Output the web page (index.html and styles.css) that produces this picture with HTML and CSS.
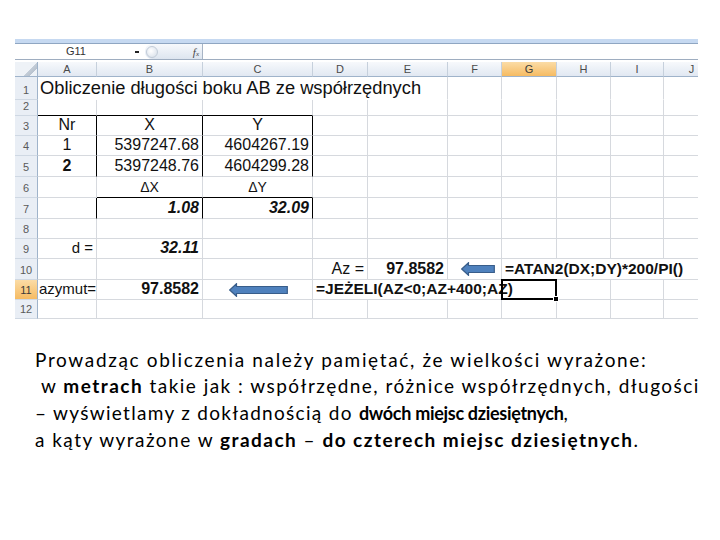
FILE: index.html
```html
<!DOCTYPE html>
<html lang="pl">
<head>
  <meta charset="UTF-8" />
  <meta name="viewport" content="width=device-width, initial-scale=1.0"/>
  <title>Obliczenie długości boku AB</title>
  <link rel="stylesheet" href="styles.css">
</head>
<body>
  <div class="excel">
    <div class="ribbon-edge"></div>
    <div class="formula-bar">
      <div class="name-box">G11</div>
      <div class="name-drop"><span></span></div>
      <div class="fx-zone">
        <span class="fx-knob"></span>
        <span class="fx">f<small>x</small></span>
      </div>
      <div class="formula-input"></div>
    </div>

    <table class="grid">
      <colgroup>
        <col class="c-rh"><col class="c-a"><col class="c-b"><col class="c-c"><col class="c-d">
        <col class="c-e"><col class="c-f"><col class="c-g"><col class="c-h"><col class="c-i"><col class="c-j">
      </colgroup>
      <tr class="r-head">
        <th class="corner"></th><th>A</th><th>B</th><th>C</th><th>D</th><th>E</th>
        <th>F</th><th class="active">G</th><th>H</th><th>I</th><th>J</th>
      </tr>
      <tr class="r1">
        <th>1</th>
        <td colspan="5" class="title">Obliczenie długości boku AB ze współrzędnych</td>
        <td></td><td></td><td></td><td></td><td></td>
      </tr>
      <tr class="r2">
        <th>2</th>
        <td class="bb"></td><td class="bb"></td><td class="bb"></td>
        <td></td><td></td><td></td><td></td><td></td><td></td><td></td>
      </tr>
      <tr class="r3">
        <th>3</th>
        <td class="br center">Nr</td><td class="br center">X</td><td class="br center">Y</td>
        <td></td><td></td><td></td><td></td><td></td><td></td><td></td>
      </tr>
      <tr class="r4">
        <th>4</th>
        <td class="br center">1</td><td class="br num">5397247.68</td><td class="br num">4604267.19</td>
        <td></td><td></td><td></td><td></td><td></td><td></td><td></td>
      </tr>
      <tr class="r5">
        <th>5</th>
        <td class="br center bold">2</td><td class="br num">5397248.76</td><td class="br num">4604299.28</td>
        <td></td><td></td><td></td><td></td><td></td><td></td><td></td>
      </tr>
      <tr class="r6">
        <th>6</th>
        <td></td><td class="bb center delta">&Delta;X</td><td class="bb center delta">&Delta;Y</td>
        <td></td><td></td><td></td><td></td><td></td><td></td><td></td>
      </tr>
      <tr class="r7">
        <th>7</th>
        <td class="br"></td><td class="br num bi">1.08</td><td class="br num bi">32.09</td>
        <td></td><td></td><td></td><td></td><td></td><td></td><td></td>
      </tr>
      <tr class="r8">
        <th>8</th>
        <td></td><td></td><td></td><td></td><td></td><td></td><td></td><td></td><td></td><td></td>
      </tr>
      <tr class="r9">
        <th>9</th>
        <td class="num label">d =</td><td class="num bi">32.11</td>
        <td></td><td></td><td></td><td></td><td></td><td></td><td></td><td></td>
      </tr>
      <tr class="r10">
        <th>10</th>
        <td></td><td></td><td></td>
        <td class="num">Az =</td>
        <td class="num bold">97.8582</td>
        <td class="arrow-cell">
          <svg class="arrow arrow-short" width="34" height="14" viewBox="0 0 34 14">
            <polygon points="0.7,7 7.5,0.7 7.5,3.5 33.3,3.5 33.3,10.5 7.5,10.5 7.5,13.3" />
          </svg>
        </td>
        <td colspan="4" class="formula">=ATAN2(DX;DY)*200/PI()</td>
      </tr>
      <tr class="r11">
        <th class="active">11</th>
        <td class="label">azymut=</td>
        <td class="num bold">97.8582</td>
        <td class="arrow-cell">
          <svg class="arrow arrow-long" width="59" height="14" viewBox="0 0 59 14">
            <polygon points="0.7,7 7.5,0.7 7.5,3.5 58.3,3.5 58.3,10.5 7.5,10.5 7.5,13.3" />
          </svg>
        </td>
        <td colspan="3" class="formula">=JEŻELI(AZ&lt;0;AZ+400;AZ)</td>
        <td class="sel"></td><td></td><td></td><td></td>
      </tr>
      <tr class="r12">
        <th>12</th>
        <td></td><td></td><td></td><td></td><td></td><td></td><td></td><td></td><td></td><td></td>
      </tr>
    </table>
  </div>

  <div class="note">
    <span class="line l1">Prowadząc obliczenia należy pamiętać, że wielkości wyrażone:</span>
    <span class="line l2">&nbsp;w <b>metrach</b> takie jak : współrzędne, różnice współrzędnych, długości</span>
    <span class="line l3">– wyświetlamy z dokładnością do <b>dwóch miejsc dziesiętnych</b>,</span>
    <span class="line l4">a kąty wyrażone w <b>gradach</b> – <b>do czterech miejsc dziesiętnych</b>.</span>
  </div>
</body>
</html>
```

FILE: styles.css
```css
* {
  box-sizing: border-box;
}

body {
  margin: 0;
  background: #fff;
  font-family: "Liberation Sans", Arial, sans-serif;
}

/* Excel screenshot */
.excel {
  margin: 39px 0 0 15px;
  width: 683px;
  overflow: hidden;
}

.ribbon-edge {
  height: 5px;
  background: #c6d9f1;
  border-bottom: 1px solid #8fa6c2;
}

.formula-bar {
  display: flex;
  height: 16px;
  border-bottom: 1px solid #9eadc0;
  margin-bottom: 2px;
  background: #fff;
}

.name-box {
  width: 118px;
  padding-left: 4px;
  text-align: center;
  font-size: 11px;
  line-height: 15px;
  color: #333;
}

.name-drop {
  width: 12px;
}

.name-drop span {
  display: block;
  width: 4px;
  height: 2px;
  margin: 7px 0 0 2px;
  background: #222;
}

.fx-zone {
  display: flex;
  align-items: center;
  width: 58px;
  background: linear-gradient(#f7f9fc, #dde5ef);
  border-right: 1px solid #a7b4c5;
  border-radius: 7px 0 0 7px;
}

.fx-knob {
  width: 12px;
  height: 12px;
  margin-left: 1px;
  border-radius: 50%;
  border: 1px solid #c2ccd8;
  background: radial-gradient(circle at 40% 40%, #fff, #d3dce7);
}

.fx {
  margin-left: auto;
  padding-right: 3px;
  font-family: "Liberation Serif", serif;
  font-style: italic;
  font-size: 11px;
  color: #444;
}

.fx small {
  font-size: 7px;
}

.formula-input {
  flex: 1;
}

/* grid */
.grid {
  border-collapse: separate;
  border-spacing: 0;
  table-layout: fixed;
  width: 705px;
}

.c-rh { width: 23px; }
.c-a { width: 59px; }
.c-b { width: 106px; }
.c-c { width: 110px; }
.c-d { width: 55px; }
.c-e { width: 80px; }
.c-f { width: 54px; }
.c-g { width: 55px; }
.c-h { width: 54px; }
.c-i { width: 53px; }
.c-j { width: 56px; }

.grid th {
  padding: 0 0 2px;
  font-weight: normal;
  font-size: 11px;
  line-height: 13px;
  color: #5a5a5a;
  background: #e9eef5;
  border-right: 1px solid #9fb3ca;
  border-bottom: 1px solid #cfd8e3;
  vertical-align: bottom;
}

.grid .r-head th {
  background: linear-gradient(#f7f9fc, #e1e8f2);
  border-right: 1px solid #c6d0dc;
  border-bottom: 1px solid #9fb3ca;
  vertical-align: middle;
  padding-bottom: 0;
  color: #4a4a4a;
}

.grid .r-head th.corner {
  border-right-color: #9fb3ca;
  background: linear-gradient(135deg, #eef2f7 62%, #c4cdd8 63%, #b9c3cf 78%, #eef2f7 79%);
}

.grid th.active,
.grid .r-head th.active {
  background: linear-gradient(#fbdca6, #f6bb62);
  color: #3a3a3a;
}

.grid td {
  padding: 0 3px 1px;
  border-right: 1px solid #d6d9de;
  border-bottom: 1px solid #d6d9de;
  vertical-align: bottom;
  white-space: nowrap;
  font-size: 16px;
  line-height: 18px;
  color: #111;
}

.r-head { height: 15px; }
.r1 { height: 23px; }
.r2 { height: 15px; }
.r3 { height: 20px; }
.r4 { height: 20px; }
.r5 { height: 21px; }
.r6 { height: 21px; }
.r7 { height: 21px; }
.r8 { height: 20px; }
.r9 { height: 20px; }
.r10 { height: 21px; }
.r11 { height: 20px; }
.r12 { height: 19px; }

.grid .r1 td {
  border-bottom-color: #fff;
}

.grid td.title {
  padding-left: 2px;
  font-size: 18.3px;
  line-height: 21px;
  vertical-align: middle;
}

.grid td.bb { border-bottom-color: #000; }
.grid td.br { border-right-color: #000; }

.center { text-align: center; }
.num { text-align: right; }
.bold { font-weight: bold; }
.bi { font-weight: bold; font-style: italic; }

.grid td.delta {
  font-size: 14px;
}

.grid td.label {
  font-size: 15px;
  padding-left: 1px;
}

.grid td.formula {
  font-weight: bold;
  font-size: 15.5px;
  padding-left: 3px;
}

.grid td.arrow-cell {
  vertical-align: middle;
  padding: 0;
}

.arrow {
  display: block;
}

.arrow polygon {
  fill: #4f81bd;
  stroke: #385d8a;
  stroke-width: 1.2;
}

.arrow-short {
  margin-left: 13px;
}

.arrow-long {
  margin-left: 26px;
}

/* active cell G11 */
.grid td.sel {
  position: relative;
}

.grid td.sel::after {
  content: "";
  position: absolute;
  top: -1px;
  left: -1px;
  right: -1px;
  bottom: -1px;
  border: 2px solid #000;
}

.grid td.sel::before {
  content: "";
  position: absolute;
  right: -3px;
  bottom: -3px;
  width: 4px;
  height: 4px;
  background: #000;
  border: 1px solid #fff;
  z-index: 1;
}

/* slide text */
.note {
  margin: 27.6px 0 0 35px;
  font-family: Lato, "Open Sans", sans-serif;
  font-size: 19px;
  line-height: 26.7px;
  color: #000;
}

.line {
  display: block;
  white-space: nowrap;
}

.l1 { letter-spacing: 1.65px; }
.l2 { letter-spacing: 1.47px; }
.l3 { letter-spacing: 1.3px; }
.l4 { letter-spacing: 1.47px; }

.l3 b {
  font-size: 18px;
  letter-spacing: -0.3px;
}
```
